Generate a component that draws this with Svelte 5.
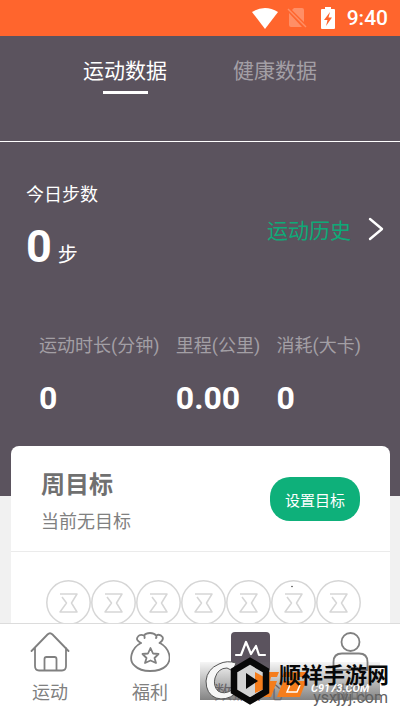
<script lang="ts">
  interface Stat {
    label: string
    value: string
  }

  const tabs = ['运动数据', '健康数据']

  const stats: Stat[] = [
    { label: '运动时长(分钟)', value: '0' },
    { label: '里程(公里)', value: '0.00' },
    { label: '消耗(大卡)', value: '0' },
  ]

  const nav = [
    { id: 'home', label: '运动' },
    { id: 'welfare', label: '福利' },
    { id: 'data', label: '数据中心' },
    { id: 'me', label: '我的' },
  ]

  const days = [0, 1, 2, 3, 4, 5, 6]

  let activeTab = $state(0)
  let activeNav = $state('data')
</script>

<div class="app">
  <header class="status">
    <svg width="26" height="21" viewBox="0 0 26 21" fill="#fff" aria-hidden="true">
      <path d="M0 4Q13-4 26 4L13 21Z" />
    </svg>
    <svg class="sim" width="20" height="20" viewBox="0 0 20 20" aria-hidden="true">
      <path d="M7 0H15Q17 0 17 2V14L5 2ZM2 5L15 19H4Q2 19 2 17Z" fill="#ff8f66" />
      <path d="M1 1L19 19" stroke="#ff8f66" stroke-width="1.5" />
    </svg>
    <svg class="battery" width="14" height="22" viewBox="0 0 14 22" aria-hidden="true">
      <path d="M4 0H10V2H13Q14 2 14 3V21Q14 22 13 22H1Q0 22 0 21V3Q0 2 1 2H4Z" fill="#fff" />
      <path d="M9 5L3 13H6.500L5 19L11 10.500H7.500Z" fill="#ff652d" />
    </svg>
    <time>9:40</time>
  </header>

  <main>
    <section class="hero">
      <div class="tabs" role="tablist">
        {#each tabs as tab, i}
          <button
            class="tab"
            class:active={activeTab === i}
            role="tab"
            aria-selected={activeTab === i}
            onclick={() => (activeTab = i)}>{tab}</button
          >
        {/each}
      </div>

      <div class="today">
        <div>
          <p class="caption">今日步数</p>
          <p class="steps"><strong>0</strong><span>步</span></p>
        </div>
        <a class="history" href="#history">
          运动历史
          <svg width="16" height="24" viewBox="0 0 16 24" fill="none" aria-hidden="true">
            <path d="M2 2L14 12L2 22" stroke="#fff" stroke-width="2.400" stroke-linecap="round" stroke-linejoin="round" />
          </svg>
        </a>
      </div>

      <dl class="stats">
        {#each stats as stat}
          <div>
            <dt>{stat.label}</dt>
            <dd>{stat.value}</dd>
          </div>
        {/each}
      </dl>
    </section>

    <section class="card">
      <div class="goal">
        <div>
          <h2>周目标</h2>
          <p>当前无目标</p>
        </div>
        <button class="set-goal">设置目标</button>
      </div>
      <div class="days">
        {#each days as day (day)}
          <svg viewBox="0 0 45 45" fill="none" stroke="#d6d6d6" stroke-width="1.500" aria-hidden="true">
            <circle cx="22.500" cy="22.500" r="21.700" />
            <path d="M14 14H31L25.500 23L31 32H14L20.500 23L16 17" stroke-linejoin="round" />
            {#if day === 5}
              <circle cx="21" cy="6.500" r=".8" fill="#444" stroke="none" />
            {/if}
          </svg>
        {/each}
      </div>
    </section>
  </main>

  <nav>
    {#each nav as item (item.id)}
      <button class:active={activeNav === item.id} onclick={() => (activeNav = item.id)}>
        <svg
          width="40"
          height="40"
          viewBox="0 0 40 40"
          fill="none"
          stroke="#808080"
          stroke-width="1.800"
          stroke-linecap="round"
          stroke-linejoin="round"
          aria-hidden="true"
        >
          {#if item.id === 'home'}
            <path d="M1.500 19L17.500 2.500Q20 0 22.500 2.500L38.500 19M5 16V34Q5 38.500 9 38.500H32Q36 38.500 36 34V16M14.500 38V27Q14.500 25 16.500 25H24.500Q26.500 25 26.500 27V38" />
          {:else if item.id === 'welfare'}
            <path d="M11 11C1 16-2 29 5 34Q10 39 20 39Q31 39 36 34C43 27 39 16 30 11M11 11Q5 8 8 4.500Q10 2 14 3.500Q16 1 20 1Q24 1 26 3.500Q30 1.500 32.500 5Q34 8 29.500 11M26 3.500Q27 5 26 6M14 3.500Q15 5 14.500 6" />
            <path d="M20.500 16L23 21.500L28.500 22L24.500 26L26 31L20.500 28.500L15 31L16.500 26L12.500 22L18 21.500Z" />
          {:else if item.id === 'data'}
            <rect x="1" y="0" width="39" height="40" rx="4" fill="#5b535e" stroke="none" />
            <path d="M6 23H11L16 10L21 22L26 14L29 23H35" stroke="#fff" stroke-width="2.200" />
          {:else}
            <circle cx="20.500" cy="10" r="9" />
            <path d="M3.500 38V30Q3.500 21.500 12 21.500H29Q37.500 21.500 37.500 30V38Z" />
          {/if}
        </svg>
        <span>{item.label}</span>
      </button>
    {/each}
  </nav>

  <aside class="watermark">
    <span class="domain">ysxjyj.com</span>
    <div class="strip">
      <svg viewBox="0 0 180 55" aria-hidden="true">
        <path
          d="M36 9Q27 6 19 10Q7 15 6 27Q6 40 16 44Q26 47 35 40L32 36Q24 41 18 37Q13 32 15 24Q18 14 27 14L33 17Z"
          fill="#f6f6f6"
          stroke="#555"
          stroke-width="1"
        />
        <path d="M60 18H79L77 23H71L70 27H77L71 43H50L56 27H63L64 23H58Z" fill="#f57d1c" />
        <path d="M84 18H107L105 23H98L97 27H106L100 43H77L83 27H90L91 23H82Z" fill="#f57d1c" />
        <path d="M90 31L87 38H97L100 31" fill="none" stroke="#fff" stroke-width="1.500" />
        <path d="M50 7L66 16.500V37.500L50 47L34 37.500V16.500Z" fill="#d4d4d4" />
        <path d="M55 18L64 23V35L55 39Z" fill="#f57d1c" />
        <path d="M50 7L66 16.500V37.500L50 47L34 37.500V16.500Z" fill="none" stroke="#080808" stroke-width="6.500" />
        <path d="M46 19L58 27L46 35Z" fill="#080808" />
      </svg>
      <span class="site">C9173.COM</span>
    </div>
    <b>顺祥手游网</b>
  </aside>
</div>

<style>
  :global(body) {
    margin: 0;
  }

  .app {
    position: relative;
    display: flex;
    flex-direction: column;
    height: 100vh;
    overflow: hidden;
    background: #f1f1f1;
    font-family: Roboto, 'Noto Sans CJK SC', sans-serif;
    color: #808080;
  }

  p,
  h2,
  dl,
  dd {
    margin: 0;
  }

  button {
    border: 0;
    padding: 0;
    background: none;
    color: inherit;
    font-family: inherit;
    cursor: pointer;
  }

  .status {
    display: flex;
    flex: none;
    align-items: center;
    justify-content: flex-end;
    height: 36px;
    padding-right: 12px;
    background: #ff652d;
    color: #fff;
  }

  .sim {
    margin-left: 9px;
  }

  .battery {
    margin: 0 12px 0 14px;
  }

  time {
    font-size: 21px;
    font-weight: 500;
  }

  main {
    flex: 1;
    min-height: 0;
    overflow: hidden;
  }

  .hero {
    padding-bottom: 78px;
    background: #5b535e;
    color: #fff;
  }

  .tabs {
    display: flex;
    justify-content: center;
    gap: 66px;
    height: 105px;
    border-bottom: 1px solid #fff;
  }

  .tab {
    display: flex;
    flex-direction: column;
    align-items: center;
    gap: 4px;
    padding-top: 20px;
    color: #a39fa5;
    font-size: 21px;
    line-height: 31px;
  }

  .tab.active {
    color: #fff;
  }

  .tab.active::after {
    content: '';
    width: 45px;
    height: 3px;
    background: #fff;
  }

  .today {
    display: flex;
    align-items: center;
    justify-content: space-between;
    padding: 40px 16px 0 26px;
  }

  .caption {
    font-size: 18px;
    line-height: 26px;
  }

  .steps {
    display: flex;
    align-items: baseline;
    gap: 6px;
  }

  .steps strong {
    font-size: 45px;
    line-height: 78px;
  }

  .steps span {
    font-size: 20px;
    line-height: 26px;
  }

  .history {
    display: flex;
    align-items: center;
    gap: 17px;
    padding-bottom: 10px;
    color: #0eaa78;
    font-size: 21px;
    text-decoration: none;
  }

  .stats {
    display: flex;
    justify-content: space-between;
    padding: 47px 39px 0;
  }

  dt {
    color: #a39fa5;
    font-size: 18px;
    line-height: 26px;
  }

  dd {
    padding-top: 19px;
    font-size: 32px;
    font-weight: 700;
    line-height: 40px;
  }

  .card {
    position: relative;
    margin: -50px 10px 0 11px;
    border-radius: 8px 8px 0 0;
    background: #fff;
  }

  .goal {
    display: flex;
    align-items: flex-start;
    justify-content: space-between;
    padding: 22px 30px 16px;
    border-bottom: 1px solid #ebebeb;
  }

  h2 {
    color: #707070;
    font-size: 24px;
    font-weight: 700;
    line-height: 35px;
  }

  .goal p {
    padding-top: 6px;
    font-size: 18px;
    line-height: 26px;
  }

  .set-goal {
    width: 90px;
    height: 44px;
    margin-top: 9px;
    border-radius: 20px;
    background: #0eb07a;
    color: #fff;
    font-size: 15px;
  }

  .days {
    display: flex;
    padding: 28px 29px 28px 35px;
  }

  .days svg {
    flex: 1;
    min-width: 0;
  }

  nav {
    display: grid;
    flex: none;
    grid-template-columns: repeat(4, 1fr);
    height: 86px;
    border-top: 1px solid #dcdcdc;
    background: #fff;
  }

  nav button {
    display: flex;
    flex-direction: column;
    align-items: center;
    gap: 8px;
    padding-top: 8px;
    font-size: 18px;
    line-height: 26px;
  }

  nav button.active {
    color: #5b535e;
  }

  .watermark {
    position: absolute;
    right: 10px;
    bottom: 0;
    width: 190px;
    height: 56px;
    color: #080808;
    pointer-events: none;
  }

  .strip {
    width: 180px;
    height: 38px;
    margin-top: 8px;
    background: linear-gradient(#70707011, #707070dd);
  }

  .strip svg {
    position: absolute;
    top: 0;
    left: 0;
    width: 180px;
    height: 55px;
  }

  .site,
  .watermark b,
  .domain {
    position: absolute;
    white-space: nowrap;
  }

  .site {
    top: 28px;
    left: 111px;
    color: #fff;
    font-size: 11px;
    font-style: italic;
    font-weight: 700;
    line-height: 14px;
  }

  .watermark b {
    right: 1px;
    top: 6px;
    font-size: 22px;
    line-height: 32px;
  }

  .domain {
    right: 2px;
    bottom: 2px;
    color: #606060;
    font-size: 16px;
    line-height: 20px;
  }
</style>
